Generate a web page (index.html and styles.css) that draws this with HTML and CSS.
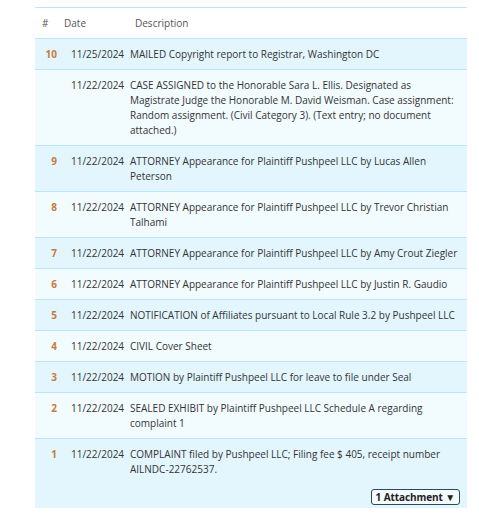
FILE: index.html
```html
<!DOCTYPE html>
<html>
<head>
<meta charset="utf-8">
<link rel="stylesheet" href="styles.css">
</head>
<body>
<div class="wrap">
<table class="docket">
  <colgroup><col class="col-num"><col class="col-date"><col class="col-desc"></colgroup>
  <thead>
    <tr><th class="h-num">#</th><th class="h-date">Date</th><th class="h-desc">Description</th></tr>
  </thead>
  <tbody>
    <tr class="odd"><td class="num">10</td><td class="date">11/25/2024</td><td class="desc">MAILED Copyright report to Registrar, Washington DC</td></tr>
    <tr class="even"><td class="num"></td><td class="date">11/22/2024</td><td class="desc">CASE ASSIGNED to the Honorable Sara L. Ellis. Designated as Magistrate Judge the Honorable M. David Weisman. Case assignment: Random assignment. (Civil Category 3). (Text entry; no document attached.)</td></tr>
    <tr class="odd"><td class="num">9</td><td class="date">11/22/2024</td><td class="desc">ATTORNEY Appearance for Plaintiff Pushpeel LLC by Lucas Allen Peterson</td></tr>
    <tr class="even"><td class="num">8</td><td class="date">11/22/2024</td><td class="desc">ATTORNEY Appearance for Plaintiff Pushpeel LLC by Trevor Christian Talhami</td></tr>
    <tr class="odd"><td class="num">7</td><td class="date">11/22/2024</td><td class="desc">ATTORNEY Appearance for Plaintiff Pushpeel LLC by Amy Crout Ziegler</td></tr>
    <tr class="even"><td class="num">6</td><td class="date">11/22/2024</td><td class="desc">ATTORNEY Appearance for Plaintiff Pushpeel LLC by Justin R. Gaudio</td></tr>
    <tr class="odd"><td class="num">5</td><td class="date">11/22/2024</td><td class="desc">NOTIFICATION of Affiliates pursuant to Local Rule 3.2 by Pushpeel LLC</td></tr>
    <tr class="even"><td class="num">4</td><td class="date">11/22/2024</td><td class="desc">CIVIL Cover Sheet</td></tr>
    <tr class="odd"><td class="num">3</td><td class="date">11/22/2024</td><td class="desc">MOTION by Plaintiff Pushpeel LLC for leave to file under Seal</td></tr>
    <tr class="even"><td class="num">2</td><td class="date">11/22/2024</td><td class="desc">SEALED EXHIBIT by Plaintiff Pushpeel LLC Schedule A regarding complaint 1</td></tr>
    <tr class="odd last"><td class="num">1</td><td class="date">11/22/2024</td><td class="desc">COMPLAINT filed by Pushpeel LLC; Filing fee $ 405, receipt number AILNDC-22762537.<div class="attach-row"><button class="attach">1 Attachment ▼</button></div></td></tr>
  </tbody>
</table>
</div>
</body>
</html>
```
FILE: styles.css
```css
html, body {
  margin: 0;
  padding: 0;
  background: #ffffff;
}
body {
  font-family: "Open Sans", "Noto Sans", sans-serif;
  font-size: 10px;
  color: #333333;
}
.wrap {
  padding: 7px 12px 0 35px;
}
.docket {
  width: 432px;
  table-layout: fixed;
  border-collapse: collapse;
  border-top: 1px solid #b9e6fa;
}
.col-num { width: 29px; }
.col-date { width: 66px; }
.docket th {
  font-weight: normal;
  color: #555555;
  text-align: left;
  height: 30px;
  padding: 0;
  border-bottom: 1px solid #b9e6fa;
  vertical-align: middle;
}
.docket th.h-num { padding-left: 7px; }
.docket th.h-date { padding-left: 0; }
.docket th.h-desc { padding-left: 5px; }
.docket td {
  vertical-align: top;
  padding: 7.5px 0;
  line-height: 15px;
  border-bottom: 1px solid #b9e6fa;
}
.odd td { background: #e3f6fe; }
.even td { background: #f2fbfe; }
.last td { border-bottom: none; padding-bottom: 3px; }
.docket td.num {
  text-align: right;
  padding-right: 7px;
  font-weight: bold;
  color: #c87a3c;
}
.docket td.date {
  padding-left: 7px;
  white-space: nowrap;
}
.docket td.desc {
  padding-right: 8px;
}
.attach-row {
  display: flex;
  justify-content: flex-end;
  padding-top: 12.5px;
}
.attach {
  font-family: inherit;
  font-size: 10px;
  letter-spacing: -0.1px;
  font-weight: bold;
  color: #222222;
  background: #f4fbfe;
  border: 1px solid #2d4a5a;
  border-radius: 3px;
  padding: 1px 4px;
  height: 16px;
  line-height: 12px;
  margin-right: -1px;
}
```
